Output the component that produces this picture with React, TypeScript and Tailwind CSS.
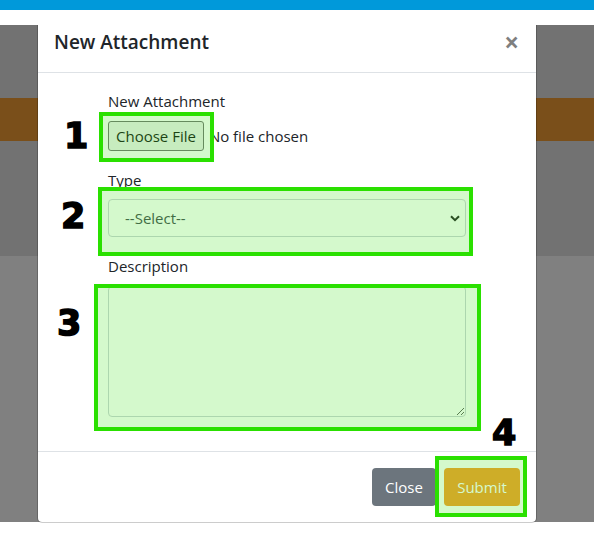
const font = { fontFamily: '"Open Sans", "Noto Sans", sans-serif' };

const Marker = ({ n, className }: { n: string; className: string }) => (
  <div
    className={`absolute text-[35px] font-bold leading-none text-black [-webkit-text-stroke:1.5px_black] ${className}`}
    style={{ fontFamily: '"DejaVu Sans", sans-serif' }}
  >
    {n}
  </div>
);

export default function App() {
  return (
    <div className="relative w-[594px] h-[540px] overflow-hidden bg-white" style={font}>
      {/* page behind the backdrop */}
      <div className="h-[10px] bg-[#0099da]" />
      <div className="h-[15px] bg-white" />
      <div className="h-[73px] bg-[#727272]" />
      <div className="h-[43px] bg-[#7a4f1a]" />
      <div className="h-[115px] bg-[#727272]" />
      <div className="h-[266px] bg-[#808080]" />
      <div className="h-[18px] bg-white" />

      {/* modal */}
      <div className="absolute left-[37px] top-[25px] w-[500px] h-[498px] flex flex-col bg-white bg-clip-padding border-x border-b border-black/20 rounded-b-[5px] text-[#212529]">
        <div className="flex items-start justify-between h-[48px] px-4 pt-[2px] border-b border-[#dee2e6]">
          <h5 className="text-[19px] font-semibold leading-[30px]">New Attachment</h5>
          <button className="text-[26px] font-bold leading-[30px] text-black/50 mr-[1px]">×</button>
        </div>

        <div className="flex-1 px-[70px] pt-4 text-[15px]">
          <div>
            <label className="block leading-6 mb-2">New Attachment</label>
            <div className="flex items-center">
              <span className="h-[30px] px-[7px] flex items-center bg-[#efefef] border border-[#767676] rounded-[3px] text-[#1b1b1b]">
                Choose File
              </span>
              <span className="ml-[5px]">No file chosen</span>
            </div>
          </div>

          <div className="mt-[17px]">
            <label className="block leading-6 mb-[7px]">Type</label>
            <div className="relative">
              <select className="block w-full h-[38px] pl-[16px] pr-8 appearance-none text-[15px] text-[#495057] bg-white border border-[#ced4da] rounded-[4px]">
                <option>--Select--</option>
              </select>
              <svg className="absolute right-[6px] top-[16px] pointer-events-none" width="10" height="7" viewBox="0 0 10 7">
                <path d="M1 1.2 L5 5.2 L9 1.2" fill="none" stroke="#2b2b2b" strokeWidth="2" />
              </svg>
            </div>
          </div>

          <div className="mt-[17px]">
            <label className="block leading-6 mb-[8px]">Description</label>
            <textarea className="block w-full h-[131px] px-3 py-[6px] bg-white border border-[#ced4da] rounded-[4px]" />
          </div>
        </div>

        <div className="flex justify-end gap-2 px-4 pt-4 pb-4 border-t border-[#dee2e6]">
          <button className="h-[38px] w-[64px] rounded-[4px] bg-[#6c757d] text-white text-[15px]">Close</button>
          <button className="h-[38px] w-[76px] rounded-[4px] bg-[#f8a132] text-white text-[15px]">Submit</button>
        </div>
      </div>

      {/* annotations */}
      <div className="absolute left-[99px] top-[112px] w-[115px] h-[50px] border-4 border-[#2ae000] bg-[#2ae000]/20" />
      <div className="absolute left-[98px] top-[187px] w-[375px] h-[69px] border-4 border-[#2ae000] bg-[#2ae000]/20" />
      <div className="absolute left-[94px] top-[284px] w-[387px] h-[147px] border-4 border-[#2ae000] bg-[#2ae000]/20" />
      <div className="absolute left-[435px] top-[456px] w-[92px] h-[61px] border-4 border-[#2ae000] bg-[#2ae000]/20" />

      <Marker n="1" className="left-[64px] top-[119px]" />
      <Marker n="2" className="left-[61px] top-[199px]" />
      <Marker n="3" className="left-[57px] top-[306px]" />
      <Marker n="4" className="left-[492px] top-[416px]" />
    </div>
  );
}
